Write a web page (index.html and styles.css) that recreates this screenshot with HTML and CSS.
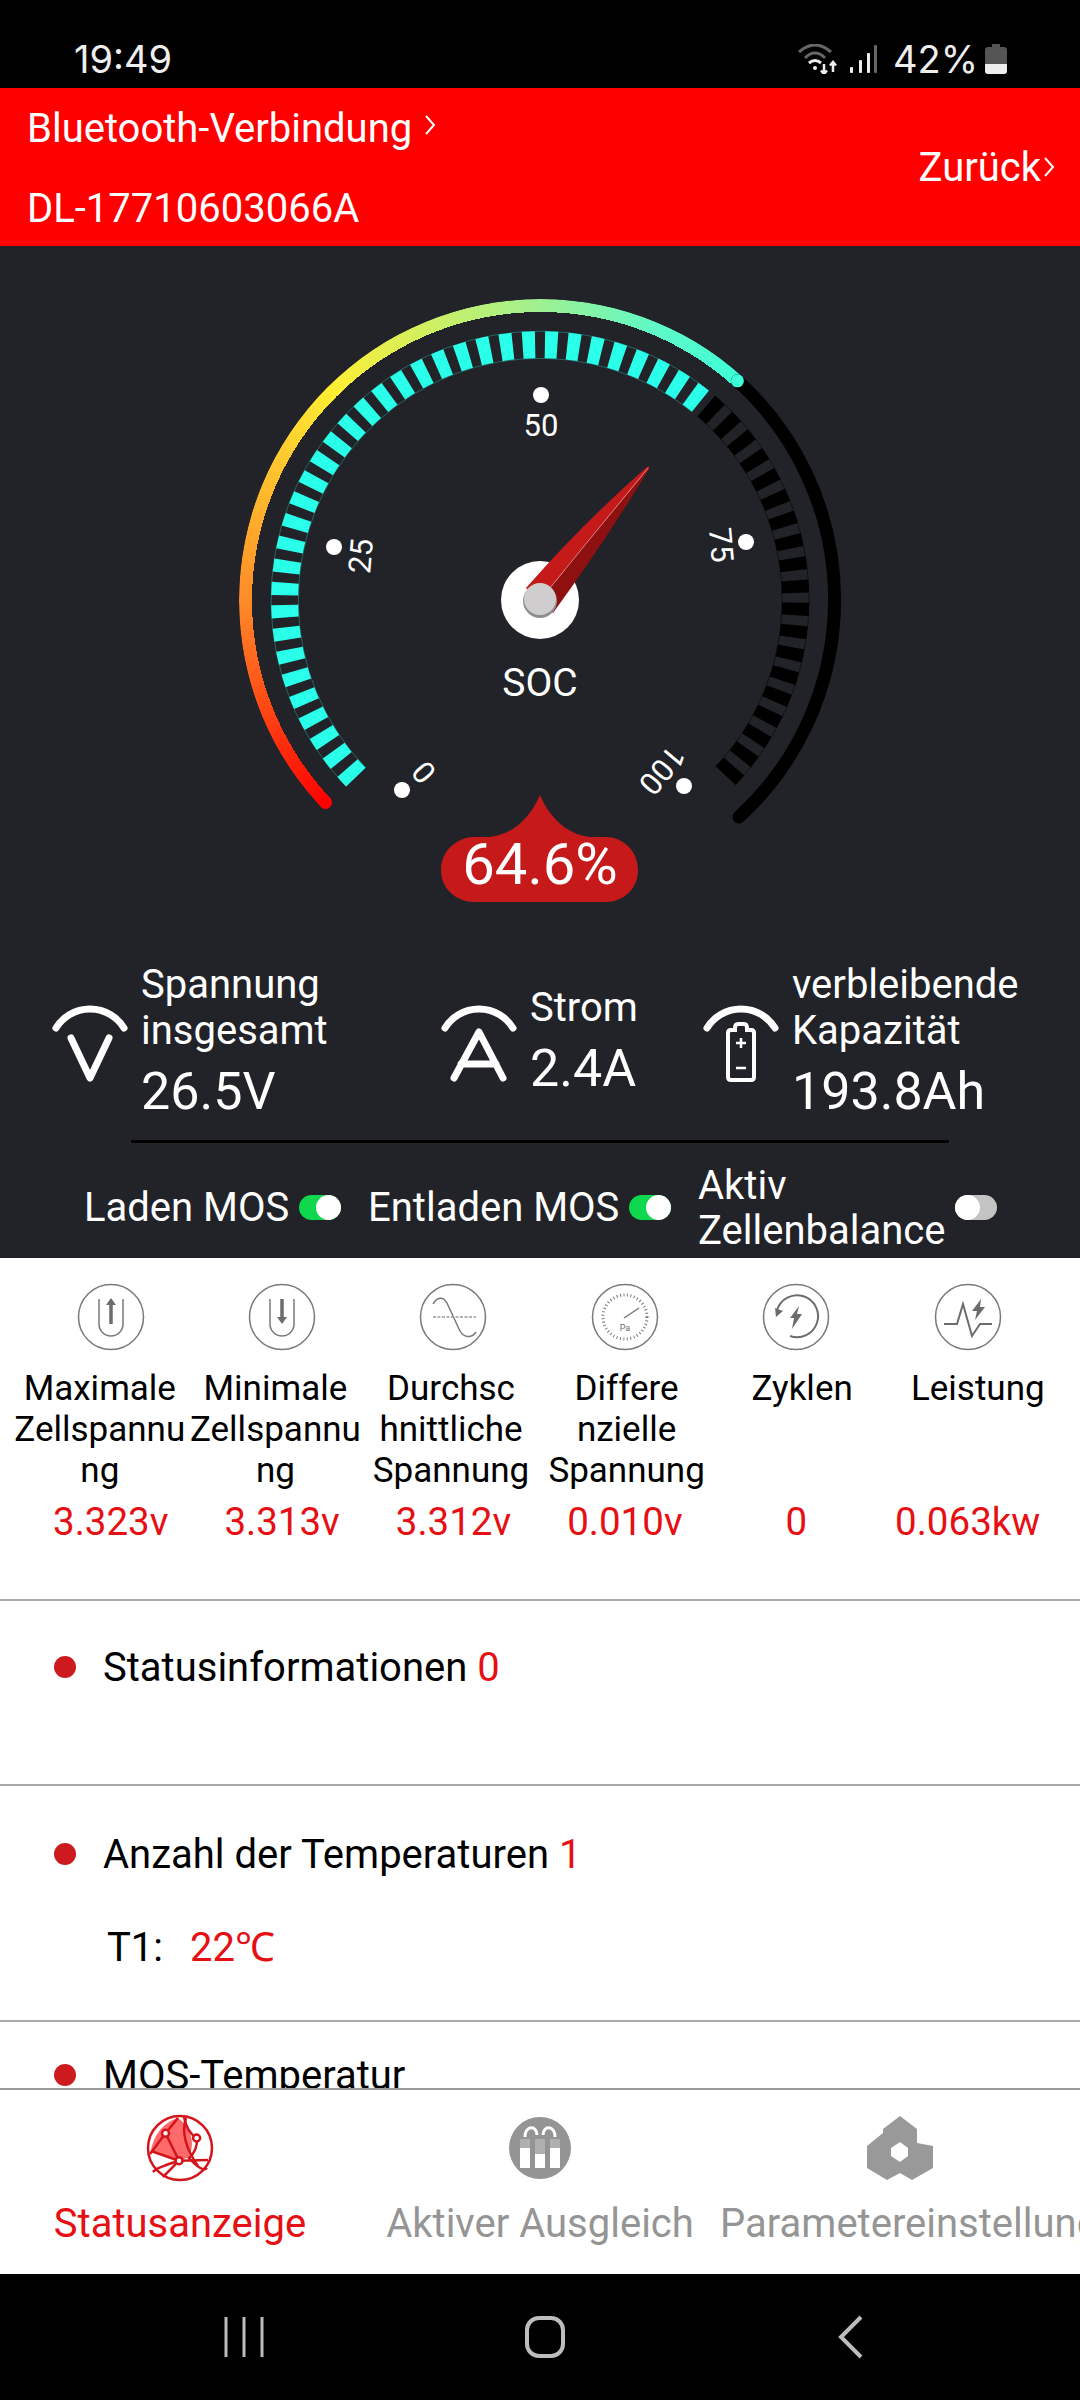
FILE: index.html
```html
<!DOCTYPE html>
<html lang="de">
<head>
  <meta charset="UTF-8" />
  <meta name="viewport" content="width=device-width, initial-scale=1.0"/>
  <title>Statusanzeige</title>
  <link rel="stylesheet" href="styles.css">
</head>
<body>

  <!-- system status bar -->
  <div class="statusbar">
    <span class="clock">19:49</span>
    <div class="sys-icons">
      <svg width="82" height="30" viewBox="0 0 82 30">
        <path d="M2 8 Q18 -6 34 8" class="wifi-dim"/>
        <path d="M8 14 Q18 4 28 14" class="wifi-dim"/>
        <path d="M12 19 Q18 14 24 19" class="wifi-on"/>
        <circle cx="18" cy="24" r="2" fill="#eee"/>
        <path d="M27 20 V30 M24 26.500 L27 30 L30 26.500 M36 28 V18 M33 21.500 L36 18 L39 21.500" class="wifi-arrows"/>
        <rect x="53" y="23" width="3" height="6" rx="1" fill="#eee"/>
        <rect x="62" y="16" width="3" height="13" rx="1" fill="#eee"/>
        <rect x="70" y="9" width="3" height="20" rx="1" fill="#eee"/>
        <rect x="77" y="1" width="3" height="28" rx="1" fill="#666"/>
      </svg>
      <span class="batt-text">42%</span>
      <svg width="22" height="30" viewBox="0 0 22 30">
        <path d="M7 0 H15 V3 H19 Q22 3 22 6 V20 H0 V6 Q0 3 3 3 H7 Z" fill="#555"/>
        <path d="M0 20 H22 V27 Q22 30 19 30 H3 Q0 30 0 27 Z" fill="#eee"/>
      </svg>
    </div>
  </div>

  <header class="topbar">
    <div class="topbar-left">
      <div class="topbar-line">Bluetooth-Verbindung
        <svg class="chev" width="12" height="22" viewBox="0 0 12 22"><path d="M2 2 L10 11 L2 20"/></svg>
      </div>
      <div class="topbar-line">DL-17710603066A</div>
    </div>
    <div class="topbar-back">Zurück<svg class="chev" width="12" height="22" viewBox="0 0 12 22"><path d="M2 2 L10 11 L2 20"/></svg></div>
  </header>

  <section class="panel">

    <div class="gauge">
      <div class="gauge-arc"></div>
      <svg class="gauge-svg" width="1080" height="714" viewBox="0 246 1080 714">
        <g transform="translate(540 600)">
          <path class="arc-off" d="M197.400 -219.200 A295 295 0 0 1 199 217"/>
          <circle cx="-214.500" cy="202.500" r="6.500" fill="#ff0000"/>
          <circle cx="197.400" cy="-219.200" r="6.500" fill="#3dffd8"/>

          <path class="hair hair-on" d="M-193.800 186.600 A269 269 0 0 1 168.900 -209.300 M-174.400 167.800 A242 242 0 0 1 151.900 -188.300"/>
          <path class="hair hair-off" d="M175.100 -204.200 A269 269 0 0 1 193.800 186.600 M157.500 -183.800 A242 242 0 0 1 174.400 167.800"/>
          <path class="ticks ticks-on" pathLength="172.800" d="M-184.100 177.200 A255.500 255.500 0 0 1 160.400 -198.800"/>
          <path class="ticks ticks-off" pathLength="93.300" d="M166.300 -194 A255.500 255.500 0 0 1 184.100 177.200"/>

          <circle cx="1" cy="-205" r="8" class="dot"/>
          <circle cx="-206" cy="-53" r="8" class="dot"/>
          <circle cx="206" cy="-58" r="8" class="dot"/>
          <circle cx="-138" cy="190" r="8" class="dot"/>
          <circle cx="144" cy="186" r="8" class="dot"/>

          <text class="scale" transform="translate(1 -175)">50</text>
          <text class="scale" transform="translate(-179 -44) rotate(-85)">25</text>
          <text class="scale" transform="translate(181 -55) rotate(85)">75</text>
          <text class="scale" transform="translate(-116 172) rotate(-130)">0</text>
          <text class="scale" transform="translate(122 170) rotate(130)">100</text>

          <circle r="39" fill="#fff"/>
          <path d="M-14 -12 Q44 -78 107 -133 Q110 -135 109 -131 L0 0 Z" fill="#c41a1a"/>
          <path d="M13 13 Q64 -57 109 -131 L0 0 Z" fill="#8e1010"/>
          <path d="M0 0 L108 -132" stroke="#d98080" stroke-width="1"/>
          <circle cy="1" r="17" fill="#8f8f8f"/>
          <circle cy="-1" r="16" fill="#cfcdcd"/>

          <text class="soc" y="96">SOC</text>
          <path d="M0 195 C8 214 24 234 50 237 H66 C82 237 98 250 98 270 C98 290 82 302 66 302 H-66 C-82 302 -99 290 -99 270 C-99 250 -82 237 -66 237 H-50 C-24 234 -8 214 0 195 Z" fill="#c61a1a"/>
          <text class="soc-val" y="284">64.6%</text>
        </g>
      </svg>
    </div>

    <div class="stats">
      <div class="stat">
        <svg width="80" height="80" viewBox="0 0 80 80">
          <path class="stat-arc" d="M4 25 A40 40 0 0 1 72 25"/>
          <path class="stat-ico" d="M19 35 L38 75 L57 35"/>
        </svg>
        <div class="stat-text">
          <div class="stat-label">Spannung<br>insgesamt</div>
          <div class="stat-val">26.5V</div>
        </div>
      </div>
      <div class="stat">
        <svg width="80" height="80" viewBox="0 0 80 80">
          <path class="stat-arc" d="M4 25 A40 40 0 0 1 72 25"/>
          <path class="stat-ico" d="M13 75 L38 29 L62 75 M20 61 H55"/>
        </svg>
        <div class="stat-text">
          <div class="stat-label">Strom</div>
          <div class="stat-val">2.4A</div>
        </div>
      </div>
      <div class="stat">
        <svg width="80" height="80" viewBox="0 0 80 80">
          <path class="stat-arc" d="M4 25 A40 40 0 0 1 72 25"/>
          <path class="stat-batt" d="M32 25 Q32 21 35 21 H41 Q44 21 44 25 V27 H48 Q51 27 51 30 V74 Q51 77 48 77 H28 Q25 77 25 74 V30 Q25 27 28 27 H32 Z"/>
          <path class="stat-thin" d="M33 40 H43 M38 35 V45 M33 65 H43"/>
        </svg>
        <div class="stat-text">
          <div class="stat-label">verbleibende<br>Kapazität</div>
          <div class="stat-val">193.8Ah</div>
        </div>
      </div>
    </div>

    <div class="rule"></div>

    <div class="switches">
      <div class="switch-item"><span>Laden MOS</span><i class="toggle on"></i></div>
      <div class="switch-item"><span>Entladen MOS</span><i class="toggle on"></i></div>
      <div class="switch-item"><span>Aktiv<br>Zellenbalance</span><i class="toggle"></i></div>
    </div>
  </section>

  <main class="content">
    <div class="metrics">
      <div class="metric-row">
        <svg class="mi" viewBox="-34 -34 68 68"><circle r="32.500"/><path d="M-12 -18 V7 A12 12 0 0 0 12 7 V-18"/><path class="thick" d="M0 -14 V7"/><path class="solid" d="M-5 -12 L0 -19 L5 -12 Z"/></svg>
        <svg class="mi" viewBox="-34 -34 68 68"><circle r="32.500"/><path d="M-12 -18 V7 A12 12 0 0 0 12 7 V-18"/><path class="thick" d="M0 -18 V2"/><path class="solid" d="M-5 0 L0 7 L5 0 Z"/></svg>
        <svg class="mi" viewBox="-34 -34 68 68"><circle r="32.500"/><path d="M-20 -13 C-16 -20 -10 -21 -6 -14 L6 12 C10 21 18 22 23 15"/><path class="dash" d="M-20 0 H23"/></svg>
        <svg class="mi" viewBox="-34 -34 68 68"><circle r="32.500"/><circle class="dial" r="22"/><path d="M-1 1 L14 -9"/><text class="pa" y="14">Pa</text></svg>
        <svg class="mi" viewBox="-34 -34 68 68"><circle r="32.500"/><path class="mid" d="M-19 -7 A21 21 0 1 1 -6 19"/><path class="solid" d="M-21 -9 L-13 -6 L-20 0 Z"/><path class="solid" d="M3 -11 L-6 1 L-2 1 L-4 12 L6 -3 L1 -3 Z"/></svg>
        <svg class="mi" viewBox="-34 -34 68 68"><circle r="32.500"/><path class="mid" d="M-24 7 H-11 L-5 -13 L4 19 L12 7 H24"/><path class="solid" d="M13 -18 L4 -6 L9 -6 L7 3 L17 -10 L12 -10 Z"/></svg>
      </div>
      <div class="label-row">
        <div>Maximale<br>Zellspannu<br>ng</div>
        <div>Minimale<br>Zellspannu<br>ng</div>
        <div>Durchsc<br>hnittliche<br>Spannung</div>
        <div>Differe<br>nzielle<br>Spannung</div>
        <div>Zyklen</div>
        <div>Leistung</div>
      </div>
      <div class="metric-row value-row">
        <div>3.323v</div>
        <div>3.313v</div>
        <div>3.312v</div>
        <div>0.010v</div>
        <div>0</div>
        <div>0.063kw</div>
      </div>
    </div>

    <div class="block block-status">
      <div class="block-title"><i class="bullet"></i>Statusinformationen <em>0</em></div>
    </div>
    <div class="block block-temp">
      <div class="block-title"><i class="bullet"></i>Anzahl der Temperaturen <em>1</em></div>
      <div class="temp-line">T1:<em>22℃</em></div>
    </div>
    <div class="block block-mos">
      <div class="block-title"><i class="bullet"></i>MOS-Temperatur</div>
    </div>
  </main>

  <nav class="tabs">
    <div class="tab active">
      <svg width="68" height="68" viewBox="-34 -34 68 68">
        <path d="M-2 -30 C14 -18 14 -2 9 9 L-1 13 L-29 2 C-26 -14 -16 -26 -2 -30 Z" fill="#ff6b6b"/>
        <g class="globe">
          <circle r="32"/>
          <path d="M-30 6 L-14.500 -14.700 L-2 -30"/>
          <path d="M-14.500 -14.700 L-1 12.700 L-29 3"/>
          <path d="M-1 12.700 L28 12"/>
          <path d="M-1 12.700 C-12 16 -24 20 -27 24"/>
          <path d="M-1 12.700 C-8 20 -14 26 -17 29"/>
          <path d="M4 -31 C6 -20 10 -14 16.600 -10 C18 -2 14 6 9 10 C16 18 24 24 27 20"/>
          <path d="M6 -30 C2 -18 4 -2 18 18"/>
        </g>
        <circle cx="-14.500" cy="-14.700" r="3.500" class="node"/>
        <circle cx="16.600" cy="-10" r="3.500" class="node"/>
        <circle cx="-1" cy="12.700" r="3.500" class="node"/>
      </svg>
      <div>Statusanzeige</div>
    </div>
    <div class="tab">
      <svg width="68" height="68" viewBox="-34 -34 68 68">
        <circle r="31" fill="#949494"/>
        <path d="M-20 -9 H-10 V20 H-20 Z M-5 -9 H5 V20 H-5 Z M10 -9 H20 V20 H10 Z" fill="#fff"/>
        <path d="M-20 -9 H-10 V0 H-20 Z M-5 -9 H5 V6 H-5 Z M10 -9 H20 V0 H10 Z" fill="#b0b0b0"/>
        <path d="M-15 -11 C-15 -23 -3 -23 -3 -13 M15 -11 C15 -23 3 -23 3 -13" fill="none" stroke="#fff" stroke-width="3"/>
      </svg>
      <div>Aktiver Ausgleich</div>
    </div>
    <div class="tab">
      <svg width="68" height="68" viewBox="0 0 68 66">
        <path fill-rule="evenodd" d="M34 1 L51 14 V28 L67 31 V53 L46 65 L34 58 L21 65 L1 53 V31 L17 18 V14 Z M34 27 L25 33 V41 L34 47 L42 41 V33 Z" fill="#999"/>
      </svg>
      <div>Parametereinstellung</div>
    </div>
  </nav>

  <div class="softkeys">
    <svg class="key-recent" width="40" height="42" viewBox="0 0 40 42"><path d="M2 1 V41 M20 1 V41 M38 1 V41"/></svg>
    <svg class="key-home" width="42" height="44" viewBox="0 0 42 44"><rect x="3" y="3" width="36" height="38" rx="12"/></svg>
    <svg width="26" height="44" viewBox="0 0 26 44"><path d="M24 2 L4 22 L24 42"/></svg>
  </div>

</body>
</html>
```

FILE: styles.css
```css
* {
  box-sizing: border-box;
}
body {
  margin: 0;
  width: 1080px;
  height: 2400px;
  overflow: hidden;
  font-family: Roboto, sans-serif;
  background: #fff;
  color: #000;
}

/* status bar */
.statusbar {
  height: 88px;
  background: #000;
  color: #eee;
  display: flex;
  justify-content: space-between;
  align-items: center;
  padding: 30px 73px 0 74px;
  font-family: Inter, sans-serif;
  font-size: 38px;
}
.sys-icons {
  display: flex;
  align-items: flex-end;
  gap: 7px;
  line-height: 30px;
}
.batt-text {
  margin-left: 7px;
}
.wifi-dim, .wifi-on, .wifi-arrows {
  fill: none;
  stroke-width: 3;
}
.wifi-dim { stroke: #666; }
.wifi-on { stroke: #eee; }
.wifi-arrows { stroke: #eee; stroke-width: 2.500; }

/* red header */
.topbar {
  height: 158px;
  background: #f00;
  color: #fff;
  display: flex;
  justify-content: space-between;
  align-items: center;
  padding: 0 25px 0 27px;
  font-size: 40px;
}
.topbar-left {
  display: flex;
  flex-direction: column;
  gap: 40px;
  margin-top: 4px;
}
.topbar-line {
  line-height: 40px;
  white-space: nowrap;
}
.topbar-back {
  display: flex;
  align-items: center;
}
.chev {
  margin-left: 2px;
  vertical-align: 6px;
}
.chev path {
  fill: none;
  stroke: #fff;
  stroke-width: 2;
}

/* dark panel */
.panel {
  height: 1012px;
  background: #212329;
  color: #fff;
}
.gauge {
  position: relative;
  height: 714px;
}
.gauge-arc {
  position: absolute;
  left: 238.500px;
  top: 52.500px;
  width: 603px;
  height: 603px;
  border-radius: 50%;
  background: conic-gradient(from -133.400deg, #ff0000 0deg, #ff8a28 43deg, #ffee33 89deg, #a0f090 133deg, #62f8c4 155deg, #3dffd8 175.400deg, transparent 175.400deg);
  -webkit-mask: radial-gradient(closest-side, transparent calc(100% - 13px), #000 calc(100% - 13px));
  mask: radial-gradient(closest-side, transparent calc(100% - 13px), #000 calc(100% - 13px));
}
.gauge-svg {
  position: absolute;
  left: 0;
  top: 0;
}
.arc-off {
  fill: none;
  stroke: #000;
  stroke-width: 13;
  stroke-linecap: round;
}
.ticks {
  fill: none;
  stroke-width: 27;
  stroke-dasharray: 2.800 2.200;
}
.ticks-on { stroke: #2affea; }
.ticks-off { stroke: #000; }
.hair {
  fill: none;
  stroke-width: 1;
}
.hair-on { stroke: rgba(42, 255, 234, 0.3); }
.hair-off { stroke: rgba(0, 0, 0, 0.5); }
.dot { fill: #fff; }
.scale {
  fill: #fff;
  font-size: 31px;
  text-anchor: middle;
  dominant-baseline: central;
}
.soc {
  fill: #fff;
  font-size: 39px;
  text-anchor: middle;
}
.soc-val {
  fill: #fff;
  font-size: 58px;
  text-anchor: middle;
}

/* voltage, current, capacity */
.stats {
  height: 166px;
  display: grid;
  grid-template-columns: 389px 262px auto;
  padding-left: 52px;
  align-items: center;
}
.stat {
  display: flex;
  align-items: center;
  gap: 9px;
}
.stat svg {
  flex: none;
}
.stat-label {
  font-size: 40px;
  line-height: 46px;
  white-space: nowrap;
}
.stat-val {
  padding-top: 5px;
  font-size: 52px;
  line-height: 66px;
  white-space: nowrap;
}
.stat-arc, .stat-ico {
  fill: none;
  stroke: #fff;
  stroke-width: 7;
  stroke-linecap: round;
  stroke-linejoin: round;
}
.stat-batt, .stat-thin {
  fill: none;
  stroke: #fff;
  stroke-width: 4;
}
.stat-thin { stroke-width: 2.500; }
.rule {
  height: 3px;
  margin: 14px 131px 0;
  background: #000;
}
.switches {
  height: 115px;
  padding: 14px 0 0 84px;
  display: grid;
  grid-template-columns: 284px 330px auto;
  align-items: center;
  font-size: 40px;
  line-height: 45px;
  white-space: nowrap;
}
.switch-item {
  display: flex;
  align-items: center;
  gap: 10px;
}
.toggle {
  position: relative;
  flex: none;
  width: 42px;
  height: 25px;
  border-radius: 13px;
  background: #c3c3c3;
}
.toggle::after {
  content: "";
  position: absolute;
  left: 0;
  top: 0;
  width: 25px;
  height: 25px;
  border-radius: 50%;
  background: #fff;
}
.toggle.on { background: #0fd84f; }
.toggle.on::after {
  left: auto;
  right: 0;
}

/* white content */
.content {
  height: 830px;
  overflow: hidden;
}
.metrics {
  height: 341px;
  padding-top: 25px;
}
.metric-row {
  display: grid;
  grid-template-columns: repeat(6, 171.400px);
  padding-left: 25px;
  justify-items: center;
}
.mi {
  width: 68px;
  height: 68px;
}
.mi circle, .mi path {
  fill: none;
  stroke: #7a7a7a;
  stroke-width: 1.500;
}
.mi .thick { stroke-width: 3.500; stroke: #6c6c6c; }
.mi .mid { stroke-width: 2; stroke: #6c6c6c; }
.mi .dash { stroke-dasharray: 3 1.500; stroke: #999; }
.mi .solid { fill: #6c6c6c; stroke: none; }
.mi .dial { stroke-dasharray: 1 2.500; stroke-width: 3; }
.pa {
  font-size: 9px;
  text-anchor: middle;
  fill: #6c6c6c;
}
.label-row {
  display: grid;
  grid-template-columns: repeat(6, 175.600px);
  padding-left: 12px;
  margin-top: 17px;
  height: 123px;
  font-size: 35px;
  line-height: 41px;
  text-align: center;
  white-space: nowrap;
}
.value-row {
  margin-top: 9px;
  font-size: 38.500px;
  line-height: 44px;
  color: #e60f14;
}
.block {
  border-top: 2px solid #aaa;
  font-size: 40px;
}
.block em, .temp-line em {
  font-style: normal;
  color: #e60f14;
}
.block-title {
  display: flex;
  align-items: center;
  padding-left: 54px;
  line-height: 46px;
  white-space: pre;
}
.bullet {
  width: 22px;
  height: 22px;
  margin: -3px 27px 0 0;
  border-radius: 50%;
  background: #cc1a1f;
}
.block-status {
  height: 185px;
  padding-top: 44px;
}
.block-temp {
  height: 236px;
  padding-top: 46px;
}
.block-mos {
  padding-top: 31px;
}
.temp-line {
  margin-top: 47px;
  padding-left: 107px;
  line-height: 46px;
}
.temp-line em {
  margin-left: 27px;
}

/* bottom tabs */
.tabs {
  height: 186px;
  border-top: 2px solid #999;
  background: #fff;
  display: grid;
  grid-template-columns: repeat(3, 360px);
  padding-top: 24px;
  color: #959595;
  font-size: 40px;
  line-height: 46px;
  text-align: center;
  white-space: nowrap;
}
.tab {
  overflow: hidden;
}
.tab svg {
  display: block;
  margin: 0 auto 19px;
}
.tab.active { color: #e60f14; }
.globe * {
  fill: none;
  stroke: #d3151b;
  stroke-width: 2.500;
}
.node {
  fill: #fff;
  stroke: #d3151b;
  stroke-width: 2.500;
}

/* android keys */
.softkeys {
  height: 126px;
  background: #000;
  display: flex;
  align-items: center;
  padding-left: 224px;
}
.softkeys svg {
  fill: none;
  stroke: #bdbdbd;
  stroke-width: 4;
}
.softkeys .key-recent {
  stroke-width: 3;
}
.key-home {
  margin: 0 271px 0 260px;
}
```
